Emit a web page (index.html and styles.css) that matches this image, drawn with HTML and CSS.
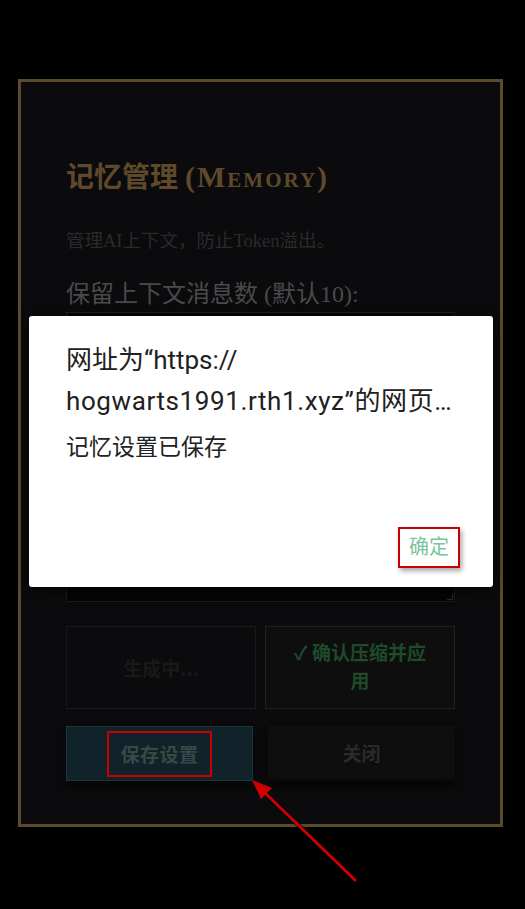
FILE: index.html
```html
<!DOCTYPE html>
<html lang="zh-CN">
<head>
<meta charset="utf-8">
<title>记忆管理</title>
<link rel="stylesheet" href="styles.css">
</head>
<body>
<div class="screen">
  <section class="panel">
    <h2 class="title">记忆管理 <span class="latin">(Memory)</span></h2>
    <p class="desc">管理AI上下文，防止Token溢出。</p>
    <label class="label">保留上下文消息数 (默认10):</label>
    <div class="input"></div>
    <div class="textarea"><span class="grip"></span></div>
    <div class="row row-top">
      <button class="btn btn-ghost">生成中...</button>
      <button class="btn btn-confirm">✓ 确认压缩并应用</button>
    </div>
    <div class="row row-bottom">
      <button class="btn btn-save"><span class="mark">保存设置</span></button>
      <button class="btn btn-close">关闭</button>
    </div>
  </section>

  <div class="dialog">
    <div class="dlg-title">
      <div class="dlg-line">网址为“https://</div>
      <div class="dlg-line wide">hogwarts1991.rth1.xyz”的网页…</div>
    </div>
    <div class="dlg-msg">记忆设置已保存</div>
    <div class="dlg-actions">
      <span class="dlg-ok">确定</span>
    </div>
  </div>

  <svg class="arrow" width="525" height="909" viewBox="0 0 525 909">
    <line x1="356" y1="881" x2="263" y2="791" stroke="rgba(0,0,0,0.5)" stroke-width="5"/>
    <line x1="355" y1="880" x2="262" y2="790" stroke="#cc0000" stroke-width="3" stroke-linecap="round"/>
    <polygon points="252,780 261,799 272,788" fill="#cc0000"/>
  </svg>
</div>
</body>
</html>
```

FILE: styles.css
```css
* { box-sizing: border-box; }

html, body {
  margin: 0;
  padding: 0;
  background: #000;
}

body {
  width: 525px;
  height: 909px;
  overflow: hidden;
  font-family: "Noto Sans CJK SC", "Noto Sans", sans-serif;
}

.screen {
  position: relative;
  width: 525px;
  height: 909px;
  padding-top: 79px;
}

.panel {
  margin-left: 18px;
  width: 485px;
  border: 3px solid #5b4a2c;
  background: #0b0b0d;
  padding: 77px 45px 43px;
}

.title {
  margin: 0;
  font-family: "Liberation Serif", "Noto Sans CJK SC", serif;
  font-size: 28px;
  line-height: 36px;
  font-weight: 700;
  color: #5e4a2b;
  white-space: nowrap;
}

.title .latin {
  font-size: 30px;
  font-variant: small-caps;
  letter-spacing: 2px;
}

.desc {
  margin: 32px 0 0;
  font-family: "Liberation Serif", "Noto Sans CJK SC", serif;
  font-size: 18.5px;
  line-height: 26px;
  color: #2a2a2b;
}

.label {
  display: block;
  margin-top: 25px;
  font-family: "Liberation Serif", "Noto Sans CJK SC", serif;
  font-size: 24px;
  line-height: 30px;
  color: #4a4a4b;
}

.input {
  margin-top: 3px;
  height: 40px;
  border: 1px solid #1e1e1e;
  background: #050505;
}

.textarea {
  position: relative;
  margin-top: 6px;
  height: 244px;
  border: 1px solid #1c1c1c;
  background: #050505;
}

.grip {
  position: absolute;
  right: 1px;
  bottom: 1px;
  width: 6px;
  height: 6px;
  border-right: 1px solid #2a2a2a;
  border-bottom: 1px solid #2a2a2a;
}

.row {
  display: grid;
  grid-template-columns: 1fr 1fr;
}

.row-top {
  margin-top: 24px;
  gap: 9px;
  height: 83px;
}

.row-bottom {
  margin-top: 17px;
  gap: 15px;
  height: 55px;
}

.btn {
  margin: 0;
  font-family: "Noto Sans CJK SC", "DejaVu Sans", sans-serif;
  font-size: 19px;
  font-weight: 700;
  line-height: 28px;
  padding: 0 20px;
  display: flex;
  align-items: center;
  justify-content: center;
  text-align: center;
  cursor: pointer;
}

.btn-ghost {
  background: #0b0b0d;
  border: 1px solid #19191a;
  color: #19191a;
}

.btn-confirm {
  background: #0e0e0f;
  border: 1px solid #10291a;
  color: #1f4a2b;
}

.btn-confirm {
  padding-bottom: 3px;
}

.btn-save {
  background: #10222a;
  border: 1px solid #1a3540;
  color: #3a4945;
  box-shadow: 0 6px 8px rgba(0, 0, 0, 0.5);
}

.btn-close {
  background: #0e0e0f;
  border: none;
  border-bottom: 2px solid #090909;
  color: #2a2a2b;
  box-shadow: 0 6px 8px rgba(0, 0, 0, 0.5);
}

.mark {
  display: inline-block;
  border: 2px solid #c80000;
  padding: 7px 11px;
  line-height: 28px;
  letter-spacing: 0.5px;
}

.dialog {
  position: absolute;
  left: 29px;
  top: 316px;
  width: 464px;
  height: 271px;
  background: #fff;
  border-radius: 3px;
  box-shadow: 0 4px 14px rgba(0, 0, 0, 0.6);
  padding: 24px 33px 19px 37px;
  display: flex;
  flex-direction: column;
  font-family: "Roboto", "Noto Sans CJK SC", sans-serif;
}

.dlg-title {
  font-size: 26px;
  line-height: 41px;
  color: #212121;
}

.dlg-line {
  white-space: nowrap;
}

.dlg-line.wide {
  letter-spacing: 0.6px;
}

.dlg-msg {
  margin-top: 11px;
  font-size: 23px;
  line-height: 30px;
  color: #222;
}

.dlg-actions {
  margin-top: auto;
  display: flex;
  justify-content: flex-end;
}

.dlg-ok {
  display: inline-block;
  border: 2px solid #c80000;
  padding: 7px 9px;
  font-size: 20px;
  line-height: 23px;
  color: #7cc49b;
  box-shadow: 2px 3px 5px rgba(0, 0, 0, 0.35);
}

.arrow {
  position: absolute;
  left: 0;
  top: 0;
  pointer-events: none;
}
```
